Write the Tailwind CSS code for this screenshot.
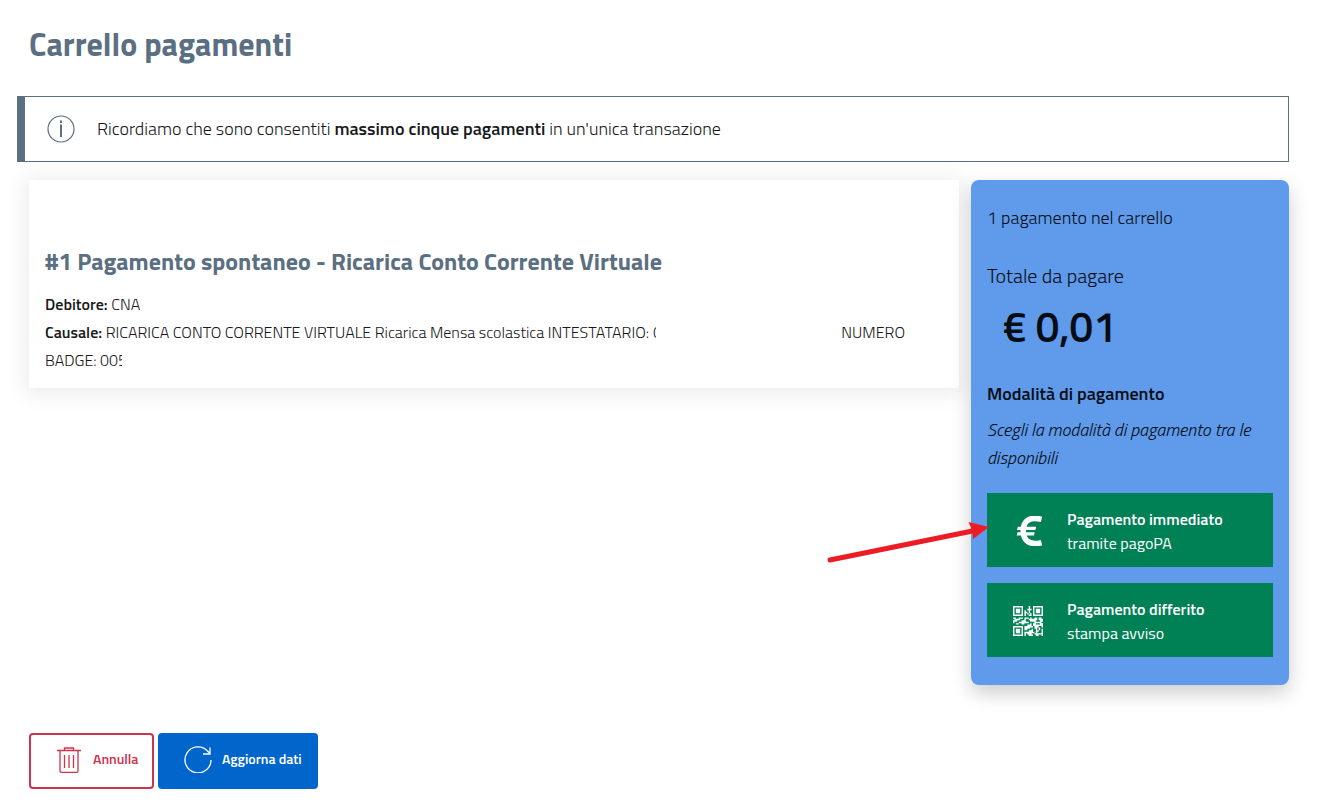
<!DOCTYPE html>
<html lang="it">
<head>
<meta charset="utf-8">
<meta name="viewport" content="width=device-width, initial-scale=1">
<title>Carrello pagamenti</title>
<script src="https://cdn.jsdelivr.net/npm/@tailwindcss/browser@4"></script>
</head>
<body class="bg-white text-[#17191c] font-['Titillium_Web',Roboto,sans-serif] font-light">
<main class="pt-6 pb-4 pl-[17px] pr-[43px]">
  <h1 class="px-3 text-[32px] leading-10 font-bold text-[#5b6f82]">Carrello pagamenti</h1>

  <div role="alert" class="mt-8 flex items-center gap-[22px] border border-l-8 border-[#5b6f82] bg-white py-4 pl-[22px] pr-4">
    <svg class="size-7 shrink-0 text-[#5b6f82]" viewBox="0 0 28 28" fill="none" stroke="currentColor" aria-hidden="true">
      <circle cx="14" cy="14" r="13" stroke-width="1.2"/>
      <path d="M14 9.500V22M14 5.500v2.500" stroke-width="2"/>
    </svg>
    <p class="text-lg leading-8">Ricordiamo che sono consentiti <strong class="font-semibold">massimo cinque pagamenti</strong> in un'unica transazione</p>
  </div>

  <div class="mt-[18px] grid grid-cols-4 items-start">
    <div class="col-span-3 px-3">
      <article class="bg-white px-4 pt-16 pb-[14px] shadow-[0_2px_20px_4px_rgba(0,0,0,0.08)]">
        <h2 class="text-2xl leading-[34px] font-bold text-[#5b6f82]">#1 Pagamento spontaneo - Ricarica Conto Corrente Virtuale</h2>
        <div class="mt-3 text-base leading-7">
          <p><strong class="font-semibold">Debitore:</strong> CNA</p>
          <p class="flex"><span class="whitespace-nowrap"><strong class="font-semibold">Causale:</strong> RICARICA CONTO CORRENTE VIRTUALE Ricarica Mensa scolastica INTESTATARIO:&nbsp;</span><span class="w-[3px] overflow-hidden">C</span><span class="ml-auto mr-[38px]">NUMERO</span></p>
          <p class="flex"><span>BADGE: 00</span><span class="w-1 overflow-hidden">5</span></p>
        </div>
      </article>
    </div>

    <aside class="relative rounded-lg bg-[#5f9bea] px-4 pt-6 pb-7 text-[#060d15] shadow-[0_8px_20px_rgba(0,0,0,0.2)]">
      <p class="text-lg leading-7">1 pagamento nel carrello</p>
      <p class="mt-[30px] text-xl leading-7">Totale da pagare</p>
      <p class="mt-2 pl-4 text-[42px] leading-[56px] font-semibold">€ 0,01</p>
      <h3 class="mt-[26px] text-lg leading-7 font-semibold">Modalità di pagamento</h3>
      <p class="mt-2 text-lg leading-7 italic">Scegli la modalità di pagamento tra le disponibili</p>
      <div class="mt-[21px] flex flex-col gap-4 text-white">
        <button type="button" class="flex h-[74px] w-full items-center gap-6 bg-[#008055] pt-px pl-[26px] text-left text-base leading-6">
          <svg class="size-[30px] shrink-0" viewBox="0 0 30 30" fill="none" stroke="currentColor" aria-hidden="true">
            <path d="M28.500 3.400C16 .2 10.200 5.200 10.200 15s6.800 14.800 18.300 11.600" stroke-width="5.600"/>
            <path fill="currentColor" stroke="none" d="M4.800 10.800h18.400l-.8 3.200H4zM4.500 16.200h17.200l-.8 3.200H3.700z"/>
          </svg>
          <span><strong class="block font-semibold">Pagamento immediato</strong><span class="block font-normal">tramite pagoPA</span></span>
        </button>
        <button type="button" class="flex h-[74px] w-full items-center gap-6 bg-[#008055] pt-px pl-[26px] text-left text-base leading-6">
          <svg class="size-[30px] shrink-0" viewBox="0 0 21 21" fill="currentColor" aria-hidden="true">
            <path fill-rule="evenodd" d="M0 0h7v7H0zM1 1v5h5V1zM14 0h7v7h-7zM15 1v5h5V1zM0 14h7v7H0zM1 15v5h5v-5z"/>
            <path d="M2 2h3v3H2zM16 2h3v3h-3zM2 16h3v3H2z"/>
            <path d="M11 0h1v2h1v1h-1v2h-1V3h-1V2h1zM8 3h1v1h1v1H9v2H8zM12 5h1v2h-2V6h1zM10 5h1v1h-1zM0 8h2v1h2V8h3v1H5v1H3v1H1v1H0v-2h1V9H0zM8 8h3v1H9v2h2v1H8v1H6v-1H4v-1h2v-1h2zM12 8h1v1h2V8h2v2h-1v1h2v1h-3v-1h-3v-1h-1V9h1zM18 8h2v1h1v2h-1v1h-2v-1h1v-1h-1zM3 12h1v1H2v-1zM8 14h2v-1h2v-1h1v2h1v1h-2v1h-2v1H8zM14 12h2v1h3v-1h2v3h-1v-1h-2v1h-1v2h1v1h-2v-2h-1v-2h-1zM8 18h3v-1h2v-1h1v2h1v1h-2v1h1v1h-3v-1h-1v-1H9v2H8zM16 18h1v1h3v-3h1v5h-1v-1h-2v1h-2v-1h-1v-1h1zM18 15h1v2h-1z"/>
          </svg>
          <span><strong class="block font-semibold">Pagamento differito</strong><span class="block font-normal">stampa avviso</span></span>
        </button>
      </div>
      <svg class="absolute right-[300px] bottom-[118px] h-12 w-[164px]" viewBox="0 0 164 48" fill="none" aria-hidden="true">
        <path d="M5 41L150 11.500" stroke="#ed1c24" stroke-width="5" stroke-linecap="round"/>
        <path d="M143.500 3l20.500 5-16 12-.5-8z" fill="#ed1c24"/>
      </svg>
    </aside>
  </div>

  <div class="mt-12 flex gap-1 px-3">
    <button type="button" class="flex h-14 w-[125px] items-center gap-2.5 rounded border-2 border-[#cc334d] bg-white pb-1 pl-6 text-sm font-semibold text-[#cc334d]">
      <svg class="size-7 shrink-0" viewBox="0 0 28 28" fill="none" stroke="currentColor" stroke-width="1.300" aria-hidden="true">
        <path d="M2 5.500h24M9.500 5.500v-2.500h9v2.500M5 5.500V26q0 1.300 1.300 1.300h15.400q1.300 0 1.300-1.300V5.500M9.500 10v13M14 10v13M18.500 10v13"/>
      </svg>
      <span>Annulla</span>
    </button>
    <button type="button" class="flex h-14 w-40 items-center gap-2.5 rounded bg-[#0066cc] pb-1 pl-[26px] text-sm font-semibold text-white">
      <svg class="size-7 shrink-0" viewBox="0 0 28 28" fill="none" stroke="currentColor" stroke-width="1.300" aria-hidden="true">
        <path d="M27 15A13 13 0 1 1 23.500 6l2.500 2.500M26 2.500v6.500h-7"/>
      </svg>
      <span>Aggiorna dati</span>
    </button>
  </div>
</main>
</body>
</html>
